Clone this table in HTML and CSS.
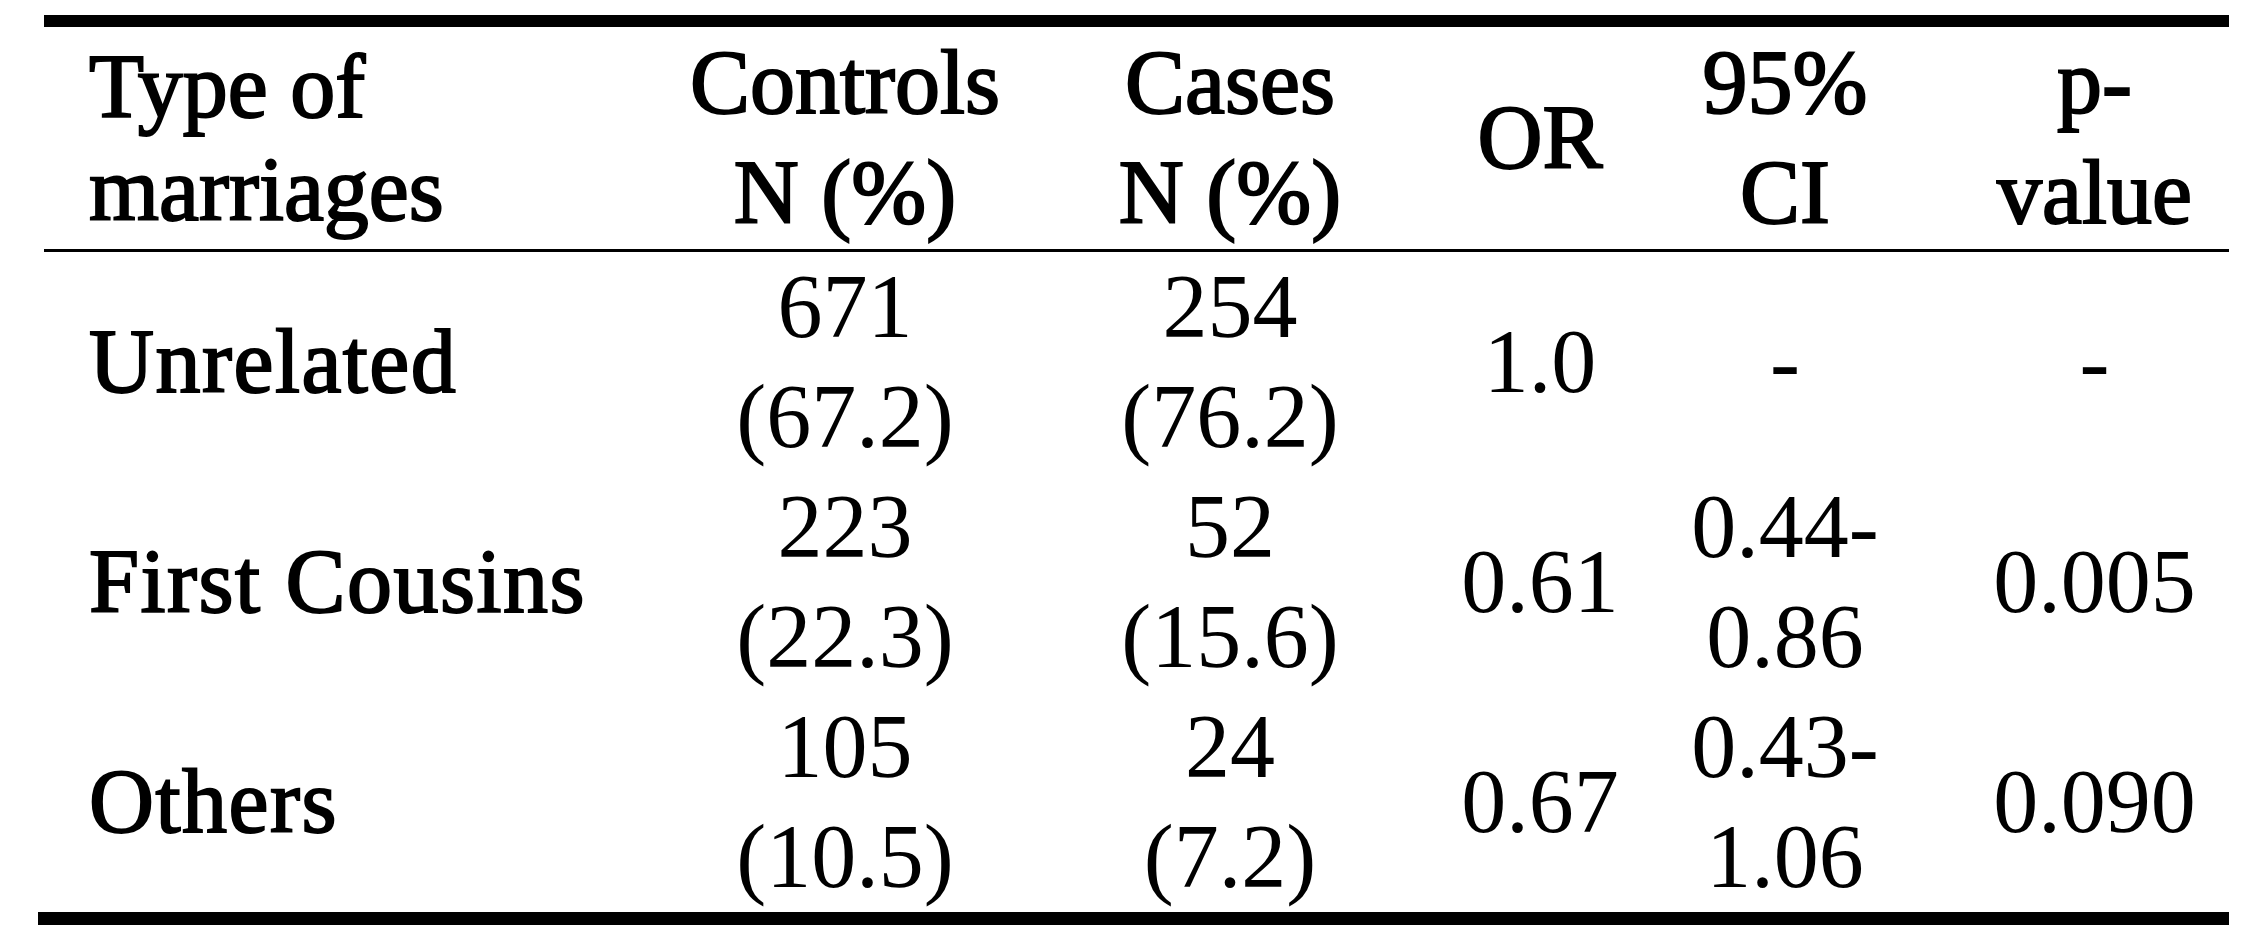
FILE: index.html
```html
<!DOCTYPE html>
<html lang="en">
<head>
<meta charset="utf-8">
<title>Type of marriages</title>
<link rel="stylesheet" href="styles.css">
</head>
<body>
<div class="sheet">
  <div class="rule-top"></div>
  <table class="data">
    <colgroup>
      <col class="c-type">
      <col class="c-controls">
      <col class="c-cases">
      <col class="c-or">
      <col class="c-ci">
      <col class="c-p">
    </colgroup>
    <thead>
      <tr>
        <th class="lbl first-head">Type of<br>marriages</th>
        <th class="lbl">Controls<br>N (%)</th>
        <th class="lbl">Cases<br>N (%)</th>
        <th class="lbl">OR</th>
        <th class="lbl">95%<br>CI</th>
        <th class="lbl pcol">p-<br>value</th>
      </tr>
    </thead>
    <tbody>
      <tr>
        <td class="lbl name">Unrelated</td>
        <td>671<br>(67.2)</td>
        <td>254<br>(76.2)</td>
        <td>1.0</td>
        <td>-</td>
        <td class="pcol">-</td>
      </tr>
      <tr>
        <td class="lbl name">First Cousins</td>
        <td>223<br>(22.3)</td>
        <td>52<br>(15.6)</td>
        <td>0.61</td>
        <td>0.44-<br>0.86</td>
        <td class="pcol">0.005</td>
      </tr>
      <tr>
        <td class="lbl name">Others</td>
        <td>105<br>(10.5)</td>
        <td>24<br>(7.2)</td>
        <td>0.67</td>
        <td>0.43-<br>1.06</td>
        <td class="pcol">0.090</td>
      </tr>
    </tbody>
  </table>
  <div class="rule-bottom"></div>
</div>
</body>
</html>
```

FILE: styles.css
```css
html, body {
  margin: 0;
  padding: 0;
  background: #ffffff;
}

body {
  font-family: "Liberation Serif", "Times New Roman", serif;
  color: #000000;
}

.sheet {
  padding: 15px 0 0 44px;
  width: 2185px;
}

.rule-top {
  height: 12px;
  background: #000000;
}

.rule-bottom {
  height: 13px;
  margin-left: -6px;
  background: #000000;
}

.data {
  width: 2185px;
  table-layout: fixed;
  border-collapse: separate;
  border-spacing: 0;
  font-size: 90px;
  line-height: 110px;
}

.c-type { width: 596px; }
.c-controls { width: 410px; }
.c-cases { width: 360px; }
.c-or { width: 260px; }
.c-ci { width: 230px; }
.c-p { width: 329px; }

.data th,
.data td {
  padding: 0;
  text-align: center;
  vertical-align: middle;
  white-space: nowrap;
  font-weight: normal;
  box-sizing: border-box;
}

.data th {
  height: 225px;
  border-bottom: 3px solid #000000;
}

.data td {
  height: 220px;
}

.data .lbl {
  -webkit-text-stroke: 2px #000000;
}

.data .first-head {
  text-align: left;
  padding-left: 45px;
  line-height: 103px;
}

.data .name {
  text-align: left;
  padding-left: 45px;
  letter-spacing: 1.5px;
}

.data .pcol {
  padding-left: 60px;
}
```
